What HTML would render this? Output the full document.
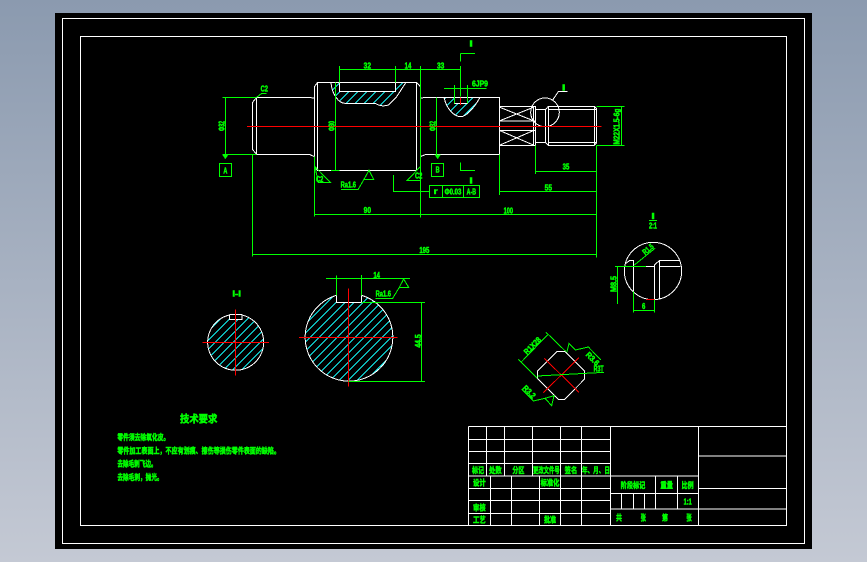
<!DOCTYPE html>
<html><head><meta charset="utf-8"><title>CAD</title>
<style>
html,body{margin:0;padding:0;width:867px;height:562px;overflow:hidden;background:linear-gradient(#8b9aaf,#c4c9d4)}
svg{display:block;position:absolute;left:0;top:0}
text{font-family:"Liberation Sans","Noto Sans CJK SC",sans-serif;font-weight:700;fill:#0f0;stroke:#0f0;stroke-width:1.5;text-anchor:middle;font-size:24px}
.w{stroke:#fff;stroke-width:3;fill:none}
.g{stroke:#0f0;stroke-width:3;fill:none}
.r{stroke:#f00;stroke-width:3;fill:none}
.f{stroke:#fff;stroke-width:1;fill:none}
.c{stroke:#1ee;stroke-width:3;fill:none}
</style></head><body>
<svg width="867" height="562" viewBox="0 0 867 562" shape-rendering="crispEdges">
<defs>
<path id="hl" d="M200,0L-200,400M227,0L-173,400M254,0L-146,400M281,0L-119,400M308,0L-92,400M335,0L-65,400M362,0L-38,400M389,0L-11,400M416,0L16,400M443,0L43,400M470,0L70,400M497,0L97,400M524,0L124,400M551,0L151,400M578,0L178,400M605,0L205,400M632,0L232,400M659,0L259,400M686,0L286,400M713,0L313,400M740,0L340,400M767,0L367,400M794,0L394,400M821,0L421,400M848,0L448,400M875,0L475,400M902,0L502,400M929,0L529,400M956,0L556,400M983,0L583,400"/>
<clipPath id="k1"><path d="M393,157C395,190 415,220 435,220L525,220Q545,232 565,225L590,200L618,157H586V185H418V157Z"/></clipPath>
<clipPath id="k2"><path d="M72,202C80,240 105,260 122,260C140,260 165,230 180,202H143V220H103V202Z"/></clipPath>
<clipPath id="s1"><path d="M118,150V163H156V150A84,84 0 1 1 118,150Z"/></clipPath>
<clipPath id="s2"><path d="M439,91V112H515V91A131.5,131.5 0 1 1 439,91Z"/></clipPath>
</defs>
<rect x="55" y="13" width="757" height="536" fill="#000"/>
<rect x="62.5" y="18.5" width="742" height="525" class="f"/>
<rect x="80.5" y="36.5" width="706" height="489" class="f"/>

<!-- left part of shaft -->
<g transform="translate(200,30) scale(.33333)">
<g clip-path="url(#k1)"><use href="#hl" class="c"/></g>
<path class="w" d="M393,157C395,190 415,220 435,220L525,220Q545,232 565,225L590,200L618,157M586,157V185H418V157"/>
<path class="w" d="M170,202H328L343,205M170,373H328L343,380M170,202V373M157,218L170,202M157,218V358L170,373M343,170V410L353,421M343,170L353,157H650L661,170V410L650,421H353V157M650,157V421M661,205L675,202H720M661,380L678,373H720"/>
<path class="g" d="M418,108V157M586,108V157M418,118H720M661,108V563M406,157V421M393,421H418M343,380V560M343,553H720M157,373V680M157,673H720M67,202H170M76,202V373M67,373H170M185,190H200M170,202L185,190M345,410L392,458H355L345,410M423,479H474L492,448H521L507,421L492,448M661,410L621,452H661M580,435V484H688M710,202V373"/>
<path fill="#0f0" d="M66,373H86L76,388Z"/>
<rect x="58" y="400" width="37" height="40" class="g"/>
<path class="r" d="M141,289H720"/>
<text x="76" y="431" textLength="12" lengthAdjust="spacingAndGlyphs">A</text>
<text x="193" y="185" textLength="22" lengthAdjust="spacingAndGlyphs">C2</text>
<text x="359" y="456" textLength="22" lengthAdjust="spacingAndGlyphs">C2</text>
<text x="656" y="446" textLength="22" lengthAdjust="spacingAndGlyphs">C2</text>
<text x="445" y="473" textLength="46" lengthAdjust="spacingAndGlyphs">Ra1.6</text>
<text x="502" y="115" textLength="22" lengthAdjust="spacingAndGlyphs">32</text>
<text x="624" y="115" textLength="20" lengthAdjust="spacingAndGlyphs">14</text>
<text x="502" y="549" textLength="22" lengthAdjust="spacingAndGlyphs">90</text>
<text x="673" y="669" textLength="30" lengthAdjust="spacingAndGlyphs">195</text>
<text transform="translate(74,288) rotate(-90)" textLength="30" lengthAdjust="spacingAndGlyphs">Φ32</text>
<text transform="translate(404,288) rotate(-90)" textLength="30" lengthAdjust="spacingAndGlyphs">Φ30</text>
</g>

<!-- right part of shaft -->
<g transform="translate(420,30) scale(.33333)">
<g clip-path="url(#k2)"><use href="#hl" class="c"/></g>
<path class="w" d="M72,202C80,240 105,260 122,260C140,260 165,230 180,202M143,202V220H103V202"/>
<path class="w" d="M40,202H238V373H15M238,230H346V346H238M238,273H346M238,301H346M240,232L340,272M240,272L340,232M240,302L340,345M240,345L340,302M341,230V346M346,238H377M346,338H377M377,238V338M377,238L385,229H523L529,235V340L523,346H385L377,338M385,229V346M385,238H529M385,338H529M523,229V346"/>
<circle cx="375" cy="247" r="43" class="w"/>
<path class="w" d="M398,210L415,185H443"/>
<path class="g" d="M0,118H122M122,108V200M122,70H165M122,70V95M122,397V422H165M72,175H200M103,165V220M143,165V220M50,202V373M0,484H28M238,373V495M238,484H529M346,346V432M346,424H529M529,346V683M529,229H614M529,346H614M605,229V346M0,553H529M0,673H529"/>
<path fill="#0f0" d="M43,373H63L53,388Z"/>
<path class="g" d="M34,400H71V440H34ZM28,466H178V503H28ZM68,466V503M130,466V503"/>
<path class="r" d="M0,289H545M122,202V225"/>
<text x="153" y="49" textLength="10" lengthAdjust="spacingAndGlyphs">I</text>
<text x="431" y="181" textLength="10" lengthAdjust="spacingAndGlyphs">I</text>
<text x="153" y="461" textLength="10" lengthAdjust="spacingAndGlyphs">I</text>
<text x="62" y="115" textLength="22" lengthAdjust="spacingAndGlyphs">33</text>
<text x="180" y="170" textLength="48" lengthAdjust="spacingAndGlyphs">6JP9</text>
<text x="53" y="428" textLength="12" lengthAdjust="spacingAndGlyphs">B</text>
<text x="47" y="492" font-size="20" textLength="12" lengthAdjust="spacingAndGlyphs">r</text>
<text x="99" y="493" textLength="50" lengthAdjust="spacingAndGlyphs">Φ0.03</text>
<text x="154" y="493" textLength="28" lengthAdjust="spacingAndGlyphs">A-B</text>
<text x="385" y="481" textLength="22" lengthAdjust="spacingAndGlyphs">55</text>
<text x="438" y="418" textLength="20" lengthAdjust="spacingAndGlyphs">35</text>
<text x="265" y="550" textLength="28" lengthAdjust="spacingAndGlyphs">100</text>
<text transform="translate(47,288) rotate(-90)" textLength="30" lengthAdjust="spacingAndGlyphs">Φ32</text>
<text transform="translate(599,290) rotate(-90)" textLength="108" lengthAdjust="spacingAndGlyphs">M22X1.5-6g</text>
</g>

<!-- sections -->
<g transform="translate(190,265) scale(.33333)">
<g clip-path="url(#s1)"><use href="#hl" class="c"/></g>
<g clip-path="url(#s2)"><use href="#hl" class="c"/></g>
<path class="w" d="M118,150V163H156V150A84,84 0 1 1 118,150Z"/>
<path class="w" d="M118,148H156"/>
<path class="w" d="M439,91V112H515V91A131.5,131.5 0 1 1 439,91Z"/>
<path class="r" d="M37,232.5H237M136.5,133V332M327,217.5H623M475.5,70V365"/>
<path class="g" d="M408,40H660M439,32V91M515,30V91M515,112H705M475,349H705M694,112V349M557,100H608L628,67H656L641,42L628,67"/>
<text x="140" y="95" textLength="26" lengthAdjust="spacingAndGlyphs">I-I</text>
<text x="560" y="39" textLength="20" lengthAdjust="spacingAndGlyphs">14</text>
<text x="580" y="95" textLength="46" lengthAdjust="spacingAndGlyphs">Ra1.6</text>
<text transform="translate(693,228) rotate(-90)" textLength="40" lengthAdjust="spacingAndGlyphs">44.5</text>
</g>

<!-- detail & square -->
<g transform="translate(500,210) scale(.33333)">
<circle cx="459" cy="183" r="86" class="w"/>
<path class="w" d="M378,160L388,152H400V245M438,169H463M463,165L478,152H540M463,165V268M478,152V268M478,169H541"/>
<path class="g" d="M345,169H438M352,169V282M400,245V308M463,268V308M400,301H463M403,165L465,115M447,31H471"/>
<path class="r" d="M440,268H463"/>
<text x="459" y="27" textLength="10" lengthAdjust="spacingAndGlyphs">I</text>
<text x="459" y="56" textLength="24" lengthAdjust="spacingAndGlyphs">2:1</text>
<text x="431" y="297" textLength="10" lengthAdjust="spacingAndGlyphs">6</text>
<text transform="translate(449,124) rotate(-40)" textLength="36" lengthAdjust="spacingAndGlyphs">R1.5</text>
<text transform="translate(350,222) rotate(-90)" textLength="48" lengthAdjust="spacingAndGlyphs">M8.5</text>
<path class="w" d="M172,424H195L253,483V508L194,568H175L112,505V484Z"/>
<path class="r" d="M133,445L237,547M237,443L130,548"/>
<path class="g" d="M55,448L112,505M138,367L197,424M62,458L145,372M112,498L312,487M200,428L207,400L226,420L265,411L303,450M135,565L162,557L155,587L135,565L100,573L65,538"/>
<text transform="translate(103,413) rotate(-45)" textLength="62" lengthAdjust="spacingAndGlyphs">R1X28</text>
<text transform="translate(272,452) rotate(45)" textLength="46" lengthAdjust="spacingAndGlyphs">R3.6</text>
<text x="296" y="485" textLength="30" lengthAdjust="spacingAndGlyphs">R3T</text>
<text transform="translate(82,551) rotate(45)" textLength="44" lengthAdjust="spacingAndGlyphs">R3.2</text>
</g>

<!-- tech requirements -->
<g transform="translate(100,405) scale(.33333)">
<text x="296" y="53" style="font-size:30px" textLength="112" lengthAdjust="spacingAndGlyphs">技术要求</text>
<text x="52" y="105" style="text-anchor:start" textLength="156" lengthAdjust="spacingAndGlyphs">零件须去除氧化皮。</text>
<text x="52" y="145" style="text-anchor:start" textLength="488" lengthAdjust="spacingAndGlyphs">零件加工表面上，不应有划痕、擦伤等损伤零件表面的缺陷。</text>
<text x="52" y="185" style="text-anchor:start" textLength="118" lengthAdjust="spacingAndGlyphs">去除毛刺飞边。</text>
<text x="52" y="225" style="text-anchor:start" textLength="136" lengthAdjust="spacingAndGlyphs">去除毛刺，抛光。</text>
</g>

<!-- title block -->
<g transform="translate(460,420) scale(.33333)">
<path class="w" d="M26,19H978M26,19V316M26,58H451M26,94H451M26,130H451M26,168H451M26,205H451M26,242H451M26,280H451M79,19V168M133,19V168M217,19V168M301,19V316M364,19V316M91,168V316M154,168V316M238,168V316M451,19V316M715,19V316M715,108H978M715,205H978M715,267H978M451,168H715M451,220H715M451,267H715M586,168V267M652,168V267M484,220V267M520,220V267M553,220V267"/>
<text x="54" y="159" textLength="36" lengthAdjust="spacingAndGlyphs">标记</text>
<text x="106" y="159" textLength="38" lengthAdjust="spacingAndGlyphs">处数</text>
<text x="175" y="159" textLength="36" lengthAdjust="spacingAndGlyphs">分区</text>
<text x="259" y="159" textLength="80" lengthAdjust="spacingAndGlyphs">更改文件号</text>
<text x="333" y="159" textLength="38" lengthAdjust="spacingAndGlyphs">签名</text>
<text x="408" y="159" textLength="84" lengthAdjust="spacingAndGlyphs">年、月、日</text>
<text x="58" y="196" textLength="38" lengthAdjust="spacingAndGlyphs">设计</text>
<text x="270" y="196" textLength="56" lengthAdjust="spacingAndGlyphs">标准化</text>
<text x="58" y="271" textLength="38" lengthAdjust="spacingAndGlyphs">审核</text>
<text x="58" y="307" textLength="38" lengthAdjust="spacingAndGlyphs">工艺</text>
<text x="270" y="307" textLength="36" lengthAdjust="spacingAndGlyphs">批准</text>
<text x="519" y="204" textLength="74" lengthAdjust="spacingAndGlyphs">阶段标记</text>
<text x="620" y="204" textLength="38" lengthAdjust="spacingAndGlyphs">重量</text>
<text x="683" y="204" textLength="36" lengthAdjust="spacingAndGlyphs">比例</text>
<text x="683" y="254" textLength="24" lengthAdjust="spacingAndGlyphs">1:1</text>
<text x="477" y="301" textLength="18" lengthAdjust="spacingAndGlyphs">共</text>
<text x="550" y="301" textLength="16" lengthAdjust="spacingAndGlyphs">张</text>
<text x="615" y="301" textLength="18" lengthAdjust="spacingAndGlyphs">第</text>
<text x="687" y="301" textLength="16" lengthAdjust="spacingAndGlyphs">张</text>
</g>
</svg>
</body></html>
